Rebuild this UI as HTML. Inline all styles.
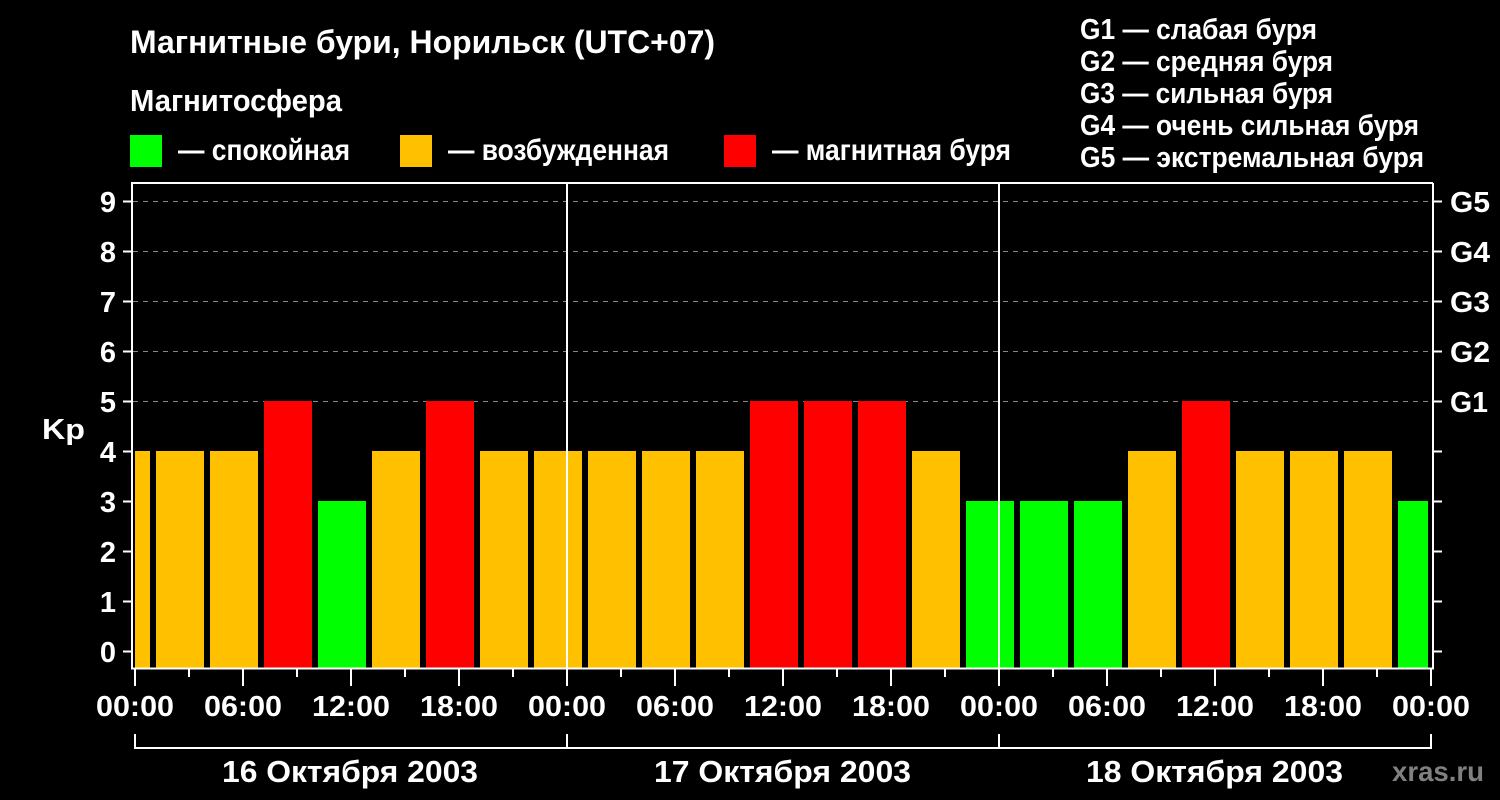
<!DOCTYPE html>
<html><head><meta charset="utf-8"><style>
html,body{margin:0;padding:0;background:#000;width:1500px;height:800px;overflow:hidden}
svg{display:block}
text{font-family:"Liberation Sans",sans-serif;font-weight:bold;fill:#fff}
</style></head><body>
<svg width="1500" height="800" viewBox="0 0 1500 800">
<text x="130" y="53" font-size="32" textLength="585" lengthAdjust="spacingAndGlyphs">Магнитные бури, Норильск (UTC+07)</text>
<text x="130" y="111" font-size="31" textLength="212" lengthAdjust="spacingAndGlyphs">Магнитосфера</text>
<rect x="130" y="135" width="32" height="32" fill="#00ff00"/>
<text x="178" y="160" font-size="30" textLength="172" lengthAdjust="spacingAndGlyphs">— спокойная</text>
<rect x="400" y="135" width="32" height="32" fill="#ffc000"/>
<text x="448" y="160" font-size="30" textLength="221" lengthAdjust="spacingAndGlyphs">— возбужденная</text>
<rect x="724" y="135" width="32" height="32" fill="#ff0000"/>
<text x="772" y="160" font-size="30" textLength="239" lengthAdjust="spacingAndGlyphs">— магнитная буря</text>
<g font-size="29">
<text x="1080" y="39" textLength="237" lengthAdjust="spacingAndGlyphs">G1 — слабая буря</text>
<text x="1080" y="71" textLength="253" lengthAdjust="spacingAndGlyphs">G2 — средняя буря</text>
<text x="1080" y="103" textLength="253" lengthAdjust="spacingAndGlyphs">G3 — сильная буря</text>
<text x="1080" y="135" textLength="339" lengthAdjust="spacingAndGlyphs">G4 — очень сильная буря</text>
<text x="1080" y="167" textLength="344" lengthAdjust="spacingAndGlyphs">G5 — экстремальная буря</text>
</g>
<g stroke="#888" stroke-width="1" stroke-dasharray="5,5">
<line x1="133" y1="201.5" x2="1433" y2="201.5"/>
<line x1="133" y1="251.5" x2="1433" y2="251.5"/>
<line x1="133" y1="301.5" x2="1433" y2="301.5"/>
<line x1="133" y1="351.5" x2="1433" y2="351.5"/>
<line x1="133" y1="401.5" x2="1433" y2="401.5"/>
</g>
<g>
<rect x="135" y="451" width="15" height="217" fill="#ffc000"/>
<rect x="156" y="451" width="48" height="217" fill="#ffc000"/>
<rect x="210" y="451" width="48" height="217" fill="#ffc000"/>
<rect x="264" y="401" width="48" height="267" fill="#ff0000"/>
<rect x="318" y="501" width="48" height="167" fill="#00ff00"/>
<rect x="372" y="451" width="48" height="217" fill="#ffc000"/>
<rect x="426" y="401" width="48" height="267" fill="#ff0000"/>
<rect x="480" y="451" width="48" height="217" fill="#ffc000"/>
<rect x="534" y="451" width="48" height="217" fill="#ffc000"/>
<rect x="588" y="451" width="48" height="217" fill="#ffc000"/>
<rect x="642" y="451" width="48" height="217" fill="#ffc000"/>
<rect x="696" y="451" width="48" height="217" fill="#ffc000"/>
<rect x="750" y="401" width="48" height="267" fill="#ff0000"/>
<rect x="804" y="401" width="48" height="267" fill="#ff0000"/>
<rect x="858" y="401" width="48" height="267" fill="#ff0000"/>
<rect x="912" y="451" width="48" height="217" fill="#ffc000"/>
<rect x="966" y="501" width="48" height="167" fill="#00ff00"/>
<rect x="1020" y="501" width="48" height="167" fill="#00ff00"/>
<rect x="1074" y="501" width="48" height="167" fill="#00ff00"/>
<rect x="1128" y="451" width="48" height="217" fill="#ffc000"/>
<rect x="1182" y="401" width="48" height="267" fill="#ff0000"/>
<rect x="1236" y="451" width="48" height="217" fill="#ffc000"/>
<rect x="1290" y="451" width="48" height="217" fill="#ffc000"/>
<rect x="1344" y="451" width="48" height="217" fill="#ffc000"/>
<rect x="1398" y="501" width="30" height="167" fill="#00ff00"/>
</g>
<g stroke="#fff" stroke-width="2" fill="none">
<polyline points="132,668 132,183 1433,183"/>
<line x1="131" y1="668.5" x2="1434" y2="668.5"/>
<line x1="1433" y1="183" x2="1433" y2="669"/>
<line x1="567" y1="183" x2="567" y2="668"/>
<line x1="999" y1="183" x2="999" y2="668"/>
</g>
<g stroke="#fff" stroke-width="2">
<line x1="123" y1="201.5" x2="131" y2="201.5"/><line x1="123" y1="251.5" x2="131" y2="251.5"/>
<line x1="123" y1="301.5" x2="131" y2="301.5"/><line x1="123" y1="351.5" x2="131" y2="351.5"/>
<line x1="123" y1="401.5" x2="131" y2="401.5"/><line x1="123" y1="451.5" x2="131" y2="451.5"/>
<line x1="123" y1="501.5" x2="131" y2="501.5"/><line x1="123" y1="551.5" x2="131" y2="551.5"/>
<line x1="123" y1="601.5" x2="131" y2="601.5"/><line x1="123" y1="651.5" x2="131" y2="651.5"/>
<line x1="1434" y1="201.5" x2="1442" y2="201.5"/><line x1="1434" y1="251.5" x2="1442" y2="251.5"/>
<line x1="1434" y1="301.5" x2="1442" y2="301.5"/><line x1="1434" y1="351.5" x2="1442" y2="351.5"/>
<line x1="1434" y1="401.5" x2="1442" y2="401.5"/><line x1="1434" y1="451.5" x2="1442" y2="451.5"/>
<line x1="1434" y1="501.5" x2="1442" y2="501.5"/><line x1="1434" y1="551.5" x2="1442" y2="551.5"/>
<line x1="1434" y1="601.5" x2="1442" y2="601.5"/><line x1="1434" y1="651.5" x2="1442" y2="651.5"/>
<line x1="135" y1="669" x2="135" y2="686"/><line x1="243" y1="669" x2="243" y2="686"/>
<line x1="351" y1="669" x2="351" y2="686"/><line x1="459" y1="669" x2="459" y2="686"/>
<line x1="567" y1="669" x2="567" y2="686"/><line x1="675" y1="669" x2="675" y2="686"/>
<line x1="783" y1="669" x2="783" y2="686"/><line x1="891" y1="669" x2="891" y2="686"/>
<line x1="999" y1="669" x2="999" y2="686"/><line x1="1107" y1="669" x2="1107" y2="686"/>
<line x1="1215" y1="669" x2="1215" y2="686"/><line x1="1323" y1="669" x2="1323" y2="686"/>
<line x1="1431" y1="669" x2="1431" y2="686"/>
<line x1="189" y1="669" x2="189" y2="677"/><line x1="297" y1="669" x2="297" y2="677"/>
<line x1="405" y1="669" x2="405" y2="677"/><line x1="513" y1="669" x2="513" y2="677"/>
<line x1="621" y1="669" x2="621" y2="677"/><line x1="729" y1="669" x2="729" y2="677"/>
<line x1="837" y1="669" x2="837" y2="677"/><line x1="945" y1="669" x2="945" y2="677"/>
<line x1="1053" y1="669" x2="1053" y2="677"/><line x1="1161" y1="669" x2="1161" y2="677"/>
<line x1="1269" y1="669" x2="1269" y2="677"/><line x1="1377" y1="669" x2="1377" y2="677"/>
<line x1="134" y1="748" x2="1432" y2="748"/>
<line x1="135" y1="734" x2="135" y2="749"/><line x1="567" y1="734" x2="567" y2="749"/>
<line x1="999" y1="734" x2="999" y2="749"/><line x1="1431" y1="734" x2="1431" y2="749"/>
</g>
<g font-size="29" text-anchor="end">
<text x="116" y="212">9</text><text x="116" y="262">8</text><text x="116" y="312">7</text>
<text x="116" y="362">6</text><text x="116" y="412">5</text><text x="116" y="462">4</text>
<text x="116" y="512">3</text><text x="116" y="562">2</text><text x="116" y="612">1</text>
<text x="116" y="662">0</text>
</g>
<text x="42" y="439" font-size="29" textLength="43" lengthAdjust="spacingAndGlyphs">Kp</text>
<g font-size="29">
<text x="1450" y="212" textLength="40" lengthAdjust="spacingAndGlyphs">G5</text><text x="1450" y="262" textLength="40" lengthAdjust="spacingAndGlyphs">G4</text><text x="1450" y="312" textLength="40" lengthAdjust="spacingAndGlyphs">G3</text>
<text x="1450" y="362" textLength="40" lengthAdjust="spacingAndGlyphs">G2</text><text x="1450" y="412" textLength="38" lengthAdjust="spacingAndGlyphs">G1</text>
</g>
<g font-size="29">
<text x="96" y="716" textLength="78" lengthAdjust="spacingAndGlyphs">00:00</text>
<text x="204" y="716" textLength="78" lengthAdjust="spacingAndGlyphs">06:00</text>
<text x="312" y="716" textLength="78" lengthAdjust="spacingAndGlyphs">12:00</text>
<text x="420" y="716" textLength="78" lengthAdjust="spacingAndGlyphs">18:00</text>
<text x="528" y="716" textLength="78" lengthAdjust="spacingAndGlyphs">00:00</text>
<text x="636" y="716" textLength="78" lengthAdjust="spacingAndGlyphs">06:00</text>
<text x="744" y="716" textLength="78" lengthAdjust="spacingAndGlyphs">12:00</text>
<text x="852" y="716" textLength="78" lengthAdjust="spacingAndGlyphs">18:00</text>
<text x="960" y="716" textLength="78" lengthAdjust="spacingAndGlyphs">00:00</text>
<text x="1068" y="716" textLength="78" lengthAdjust="spacingAndGlyphs">06:00</text>
<text x="1176" y="716" textLength="78" lengthAdjust="spacingAndGlyphs">12:00</text>
<text x="1284" y="716" textLength="78" lengthAdjust="spacingAndGlyphs">18:00</text>
<text x="1392" y="716" textLength="78" lengthAdjust="spacingAndGlyphs">00:00</text>
</g>
<g font-size="31">
<text x="222" y="782" textLength="256" lengthAdjust="spacingAndGlyphs">16 Октября 2003</text>
<text x="654" y="782" textLength="257" lengthAdjust="spacingAndGlyphs">17 Октября 2003</text>
<text x="1086" y="782" textLength="257" lengthAdjust="spacingAndGlyphs">18 Октября 2003</text>
</g>
<text x="1392" y="781" font-size="28" style="fill:#808080" textLength="92" lengthAdjust="spacingAndGlyphs">xras.ru</text>
</svg>
</body></html>
